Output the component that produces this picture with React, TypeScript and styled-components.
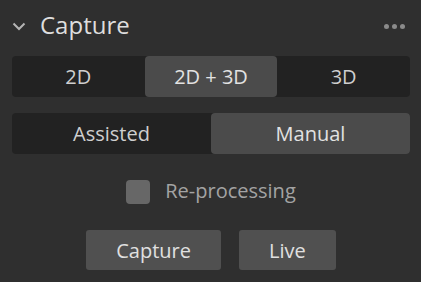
import React, { useState } from 'react';
import styled, { createGlobalStyle } from 'styled-components';

const GlobalStyle = createGlobalStyle`
  html, body {
    margin: 0;
    padding: 0;
    background: #2f2f2f;
  }
  body {
    font-family: "Open Sans", "Noto Sans", sans-serif;
  }
`;

const Panel = styled.div`
  width: 421px;
  height: 282px;
  box-sizing: border-box;
  padding: 0 11px 0 12px;
  background: #2f2f2f;
  display: flex;
  flex-direction: column;
`;

const Header = styled.div`
  height: 51px;
  margin-bottom: 5px;
  display: flex;
  align-items: center;
`;

const Chevron = styled.svg`
  width: 14px;
  height: 10px;
  margin-right: 14px;
  margin-top: 1px;
`;

const Title = styled.div`
  flex: 1;
  font-size: 24px;
  color: #dedede;
  line-height: 1;
  margin-top: -2px;
`;

const MoreDots = styled.div`
  display: flex;
  gap: 3px;
  margin-right: 5px;
  margin-top: 1px;

  span {
    width: 5px;
    height: 5px;
    border-radius: 50%;
    background: #8a8a8a;
  }
`;

const Segmented = styled.div<{ $cols: number }>`
  display: grid;
  grid-template-columns: repeat(${p => p.$cols}, 1fr);
  height: 41px;
  background: #222222;
  border-radius: 4px;
  margin-bottom: 16px;
`;

const Segment = styled.button<{ $active?: boolean }>`
  border: none;
  border-radius: 4px;
  padding: 0;
  font-family: inherit;
  font-size: 20px;
  color: ${p => (p.$active ? '#e2e2e2' : '#cfcfcf')};
  background: ${p => (p.$active ? '#4b4b4b' : 'transparent')};
  cursor: pointer;
`;

const CheckRow = styled.label`
  display: flex;
  justify-content: center;
  align-items: center;
  gap: 15px;
  height: 24px;
  margin-top: 10px;
  margin-bottom: 26px;
  cursor: pointer;
`;

const Box = styled.span<{ $checked: boolean }>`
  width: 24px;
  height: 24px;
  border-radius: 4px;
  background: ${p => (p.$checked ? '#7a7a7a' : '#676767')};
  margin-right: 0;
`;

const CheckLabel = styled.span`
  font-size: 20px;
  color: #a3a3a3;
  line-height: 1;
  margin-top: -2px;
`;

const ButtonRow = styled.div`
  display: flex;
  justify-content: center;
  gap: 18px;
`;

const ActionButton = styled.button`
  height: 40px;
  padding: 0 30px;
  border: none;
  border-radius: 3px;
  background: #505050;
  color: #e0e0e0;
  font-family: inherit;
  font-size: 20px;
  cursor: pointer;
`;

export default function App() {
  const [mode, setMode] = useState('2D + 3D');
  const [assist, setAssist] = useState('Manual');
  const [reprocess, setReprocess] = useState(false);

  return (
    <>
      <GlobalStyle />
      <Panel>
        <Header>
          <Chevron viewBox="0 0 14 10">
            <path d="M1.5 2.5 L7 8 L12.5 2.5" fill="none" stroke="#b4b4b4" strokeWidth="2" />
          </Chevron>
          <Title>Capture</Title>
          <MoreDots>
            <span />
            <span />
            <span />
          </MoreDots>
        </Header>

        <Segmented $cols={3}>
          {['2D', '2D + 3D', '3D'].map(m => (
            <Segment key={m} $active={mode === m} onClick={() => setMode(m)}>
              {m}
            </Segment>
          ))}
        </Segmented>

        <Segmented $cols={2}>
          {['Assisted', 'Manual'].map(m => (
            <Segment key={m} $active={assist === m} onClick={() => setAssist(m)}>
              {m}
            </Segment>
          ))}
        </Segmented>

        <CheckRow onClick={() => setReprocess(!reprocess)}>
          <Box $checked={reprocess} />
          <CheckLabel>Re-processing</CheckLabel>
        </CheckRow>

        <ButtonRow>
          <ActionButton>Capture</ActionButton>
          <ActionButton>Live</ActionButton>
        </ButtonRow>
      </Panel>
    </>
  );
}
